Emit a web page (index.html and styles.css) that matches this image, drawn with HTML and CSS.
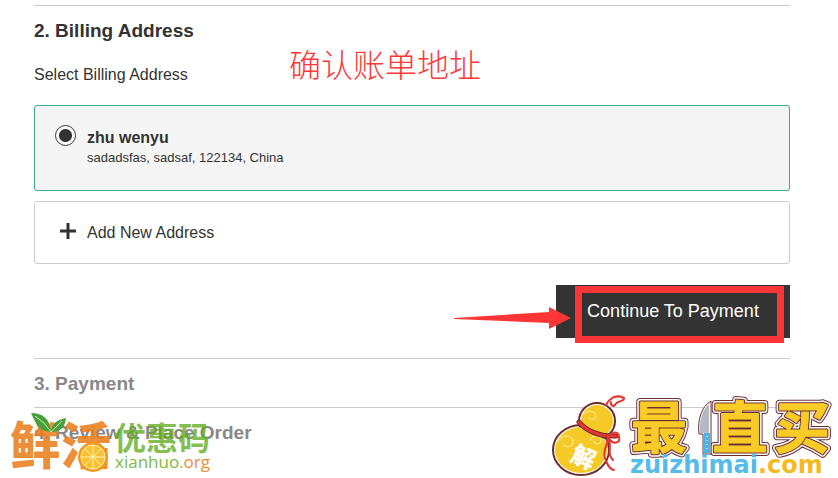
FILE: index.html
```html
<!DOCTYPE html>
<html lang="en">
<head>
    <meta charset="UTF-8">
    <meta name="viewport" content="width=device-width, initial-scale=1.0">
    <title>Checkout</title>
    <link rel="stylesheet" href="styles.css">
</head>
<body>

<main class="checkout">
    <section class="step">
        <h2>2. Billing Address</h2>
        <p class="note" lang="zh">确认账单地址</p>

        <form>
            <p class="subtitle">Select Billing Address</p>

            <label class="card selected" for="address1">
                <input type="radio" id="address1" name="address" checked>
                <span class="details">
                    <strong>zhu wenyu</strong>
                    <span class="address">sadadsfas, sadsaf, 122134, China</span>
                </span>
            </label>

            <button type="button" class="card add">
                <svg class="plus" viewBox="0 0 21 20"><path d="M5 8h16M13 0v16"/></svg>
                Add New Address
            </button>

            <div class="actions">
                <svg class="arrow" viewBox="0 0 118 22"><path d="M0 11 95 5V0l22 11-22 11v-6L0 12z"/></svg>
                <button type="button" class="continue">Continue To Payment</button>
                <span class="highlight"></span>
            </div>
        </form>
    </section>

    <section class="step disabled">
        <h2>3. Payment</h2>
    </section>

    <section class="step disabled">
        <h2>4. Review &amp; Place Order</h2>
    </section>
</main>

<!-- Xianhuo logo -->
<svg class="logo-left" viewBox="0 0 210 70" lang="zh">
    <text class="fresh" x="2" y="56">鲜</text>
    <text class="fresh" x="53" y="56">活</text>
    <path class="leaf" d="M23 5c12 0 19 6 20 19-13-1-15-9-20-19zM43 24c1-8 5-12 15-14-1 9-5 14-15 14z"/>
    <path class="vein" d="M27 8q10 6 16 16M43 24l11-11"/>
    <circle class="peel" cx="85" cy="49" r="15"/>
    <circle class="pulp" cx="85" cy="49" r="12"/>
    <path class="segments" d="M85 37v24M73 49h24M77 41l16 16M77 57l16-16"/>
    <text class="coupon" x="106" y="42">优惠码</text>
    <text class="domain" x="107" y="60">xianhuo<tspan class="org">.org</tspan></text>
</svg>

<!-- Zuizhimai logo -->
<svg class="logo-right" viewBox="0 0 290 88" lang="zh">
    <defs>
        <g id="brand">
            <text x="111" y="58">最</text>
            <text x="192" y="58">直</text>
            <text x="254" y="58">买</text>
        </g>
    </defs>
    <g class="gourd">
        <ellipse cx="33" cy="60" rx="28" ry="25"/>
        <circle cx="49" cy="31" r="18"/>
    </g>
    <g class="gourd-shine">
        <ellipse cx="33" cy="60" rx="26" ry="23"/>
        <circle cx="49" cy="31" r="16"/>
    </g>
    <path class="swirl" d="M35 25c3-5 13-5 13 1 0 5-7 4-7 1M10 52c2-8 15-8 15 0 0 6-9 6-10 1M42 51c1-6 10-7 11-1 0 5-7 5-7 1"/>
    <path class="ribbon-edge" d="M31 32c6 8 20 15 37 14"/>
    <path class="ribbon" d="M31 32c6 8 20 15 37 14"/>
    <path class="tail" d="M60 47c8-8 12-4 11 4-5 4-9 0-11-4 0 9-6 14-3 21 2 6 4 11 9 12M60 47c5 10-2 16 5 23"/>
    <path class="stem" d="M58 15c4-8 11-10 18-7 1 4-7 2-9 7-2 2-5 0-4-3M76 8c-4-3-10-2-13 1"/>
    <text class="charm" x="0" y="10" transform="translate(36 66) rotate(24)">解</text>
    <use class="brand-outer" href="#brand"/>
    <use class="brand-gap" href="#brand"/>
    <use class="brand-inner" href="#brand"/>
    <use class="brand-fill" href="#brand"/>
    <path class="knife" d="M163 11c-9 5-14 19-12 33h4v20h8z"/>
    <path class="blade" d="M161 14c-7 6-10 17-9 29h9z"/>
    <path class="handle" d="M156 43h6v20h-6z"/>
    <path class="rivets" d="M159 46v14"/>
    <text class="url" x="82" y="83">zuizhimai<tspan class="com">.com</tspan></text>
</svg>

</body>
</html>
```
FILE: styles.css
```css
* {
    box-sizing: border-box;
}
body {
    position: relative;
    min-height: 100vh;
    margin: 0;
    background-color: #fff;
    color: #333;
    font-family: "Liberation Sans", Arial, sans-serif;
    font-size: 16px;
    line-height: 20px;
}
.checkout {
    padding: 5px 48px 0 34px;
}
.step {
    position: relative;
    border-top: 1px solid #ccc;
}
.step h2 {
    margin: 0;
    padding-top: 2px;
    font-size: 19px;
    line-height: 46px;
}
.disabled h2 {
    color: #888;
}
.subtitle {
    margin: 11px 0 20px;
}
.note {
    position: absolute;
    top: 37px;
    left: 255px;
    margin: 0;
    color: #ff3838;
    font-family: "Noto Sans CJK SC", sans-serif;
    font-size: 32px;
    font-weight: 300;
    line-height: 40px;
}
.card {
    display: flex;
    gap: 11px;
    width: 100%;
    margin-bottom: 10px;
    padding: 19px 20px 22px;
    border: 1px solid #ccc;
    border-radius: 3px;
    background-color: #fff;
    color: #333;
    font: inherit;
    text-align: left;
    cursor: pointer;
}
.selected {
    border-color: #3bab8b;
    background-color: #f5f5f5;
}
.card input {
    appearance: none;
    flex: none;
    width: 21px;
    height: 21px;
    margin: 0;
    border: 1px solid #333;
    border-radius: 50%;
    background: radial-gradient(circle, #333 6px, #fff 7px);
}
.details {
    padding-top: 3px;
}
.details strong, .address {
    display: block;
}
.address {
    font-size: 13px;
}
.add {
    align-items: center;
    padding: 21px 20px 20px;
}
.plus {
    width: 21px;
    height: 20px;
    stroke: #333;
    stroke-width: 3;
}
.actions {
    position: relative;
    width: 234px;
    margin: 21px 0 20px auto;
}
.continue {
    display: block;
    width: 100%;
    padding: 16px 0 17px;
    border: none;
    background-color: #333;
    color: #fff;
    font: inherit;
    font-size: 18px;
    cursor: pointer;
}
.highlight {
    position: absolute;
    top: 1px;
    right: 6px;
    bottom: -5px;
    left: 19px;
    border: 7px solid #fc3636;
    pointer-events: none;
}
.arrow {
    position: absolute;
    top: 22px;
    left: -102px;
    width: 118px;
    height: 22px;
    fill: #fc3636;
}

/* Logos */
.logo-left, .logo-right {
    position: absolute;
    bottom: 0;
    font-family: "Noto Sans CJK SC", sans-serif;
    pointer-events: none;
}
.logo-left {
    left: 8px;
    width: 210px;
    height: 70px;
}
.fresh {
    fill: #e97f1c;
    fill-opacity: 0.88;
    font-size: 50px;
    font-weight: 900;
}
.leaf {
    fill: #46a03c;
}
.vein {
    fill: none;
    stroke: #d4edb0;
}
.peel {
    fill: #f39a1e;
}
.pulp {
    fill: #fbc02d;
    stroke: #fff3c4;
}
.segments {
    stroke: #fff3c4;
}
.coupon {
    fill: #64ad20;
    fill-opacity: 0.8;
    font-size: 32px;
    font-weight: 700;
}
.domain {
    fill: #7cba42;
    font-family: "Open Sans", sans-serif;
    font-size: 17px;
}
.org {
    fill: #ec8e36;
}
.logo-right {
    right: 0;
    width: 290px;
    height: 88px;
}
.gourd {
    fill: #fff;
    stroke: #6b2c33;
    stroke-width: 2;
}
.gourd-shine {
    fill: #f5c926;
}
.swirl {
    fill: none;
    stroke: #fff0a8;
    stroke-width: 1;
}
.ribbon-edge, .ribbon, .tail, .stem {
    fill: none;
    stroke: #e5352c;
    stroke-linecap: round;
}
.ribbon-edge {
    stroke: #6b2c33;
    stroke-width: 5;
}
.ribbon {
    stroke-width: 3;
}
.tail, .stem {
    stroke-width: 2;
}
.charm {
    fill: #fff;
    font-size: 24px;
    font-weight: 900;
    text-anchor: middle;
}
.brand-outer, .brand-gap, .brand-inner, .brand-fill {
    fill: #f9cb27;
    font-size: 56px;
    font-weight: 700;
    stroke-linejoin: round;
    text-anchor: middle;
}
.brand-outer {
    stroke: #6b2c33;
    stroke-width: 8;
}
.brand-gap {
    stroke: #fff;
    stroke-width: 6;
}
.brand-inner {
    stroke: #6b2c33;
    stroke-width: 3;
}
.brand-fill {
    stroke: #f9cb27;
    stroke-width: 1;
}
.knife {
    fill: #fff;
    stroke: #6b2c33;
}
.blade {
    fill: #aebbc4;
}
.handle {
    fill: #4cb5e6;
}
.rivets {
    stroke: #fff;
    stroke-dasharray: 1 3;
}
.url {
    fill: #55bbea;
    font-family: "DejaVu Sans", sans-serif;
    font-size: 24px;
    font-weight: 700;
}
.com {
    fill: #f5b921;
}
```
